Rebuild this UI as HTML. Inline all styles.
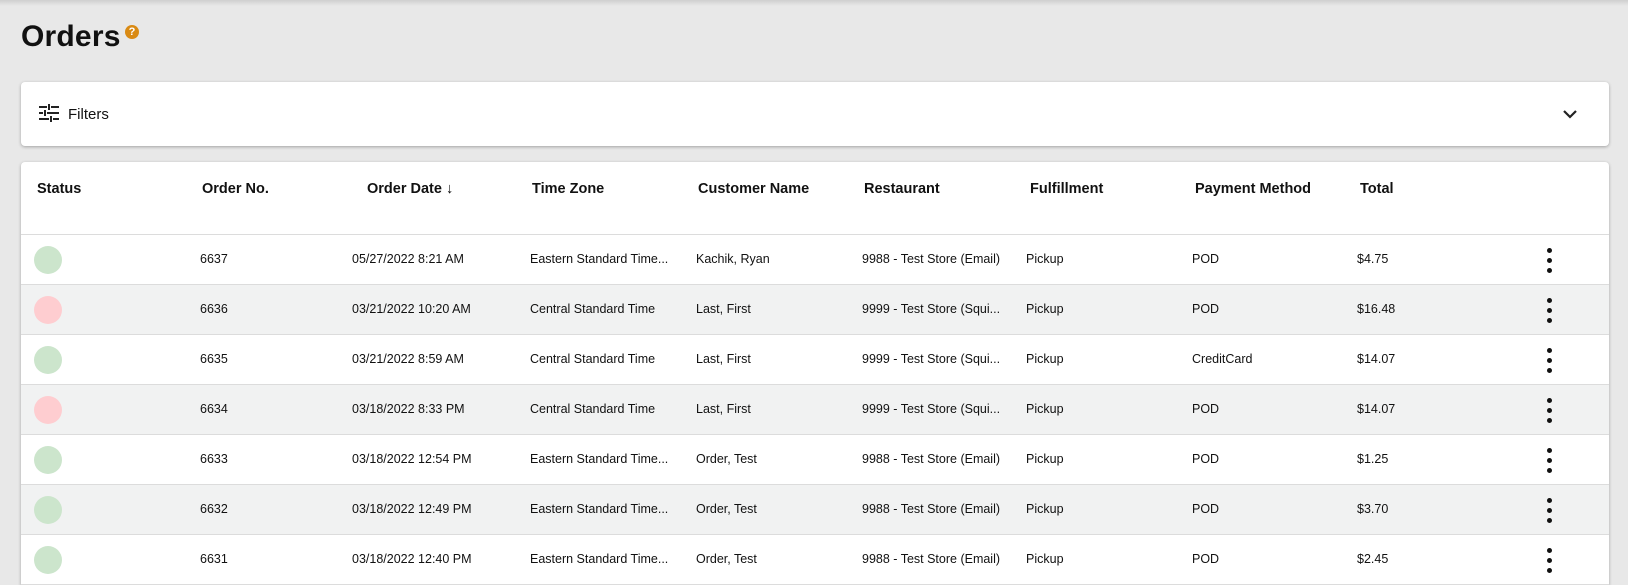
<!DOCTYPE html>
<html><head><meta charset="utf-8"><style>
*{margin:0;padding:0;box-sizing:border-box}
html,body{width:1628px;height:585px;overflow:hidden}
body{background:#e8e8e8;font-family:"Liberation Sans",sans-serif;color:#111;position:relative}
.topsh{position:absolute;left:0;top:0;width:1628px;height:6px;background:linear-gradient(#cfcfcf,#e8e8e8)}
h1{position:absolute;left:21px;top:20px;font-size:30px;font-weight:bold;letter-spacing:0.2px}
.help{position:absolute;left:125px;top:25px;width:14px;height:14px;border-radius:50%;background:#d98a14;color:#fff;font-size:11px;font-weight:bold;text-align:center;line-height:14px}
.card{position:absolute;left:21px;width:1588px;background:#fff;border-radius:4px;box-shadow:0 1px 3px rgba(0,0,0,.3)}
.filters{top:82px;height:64px}
.filters .lbl{position:absolute;left:47px;top:24px;font-size:15px}
.tbl{top:162px;height:423px;overflow:hidden;border-bottom-left-radius:0;border-bottom-right-radius:0}
.hdr{position:absolute;top:0;height:73px;width:100%;border-bottom:1px solid #dcdcdc}
.h{position:absolute;top:19px;font-size:14.5px;font-weight:bold}
.row{position:absolute;left:0;width:100%;height:50px;border-bottom:1px solid #dcdcdc}
.row.alt{background:#f1f2f2}
.c{position:absolute;top:17px;font-size:12.5px;white-space:nowrap}
.dot{position:absolute;left:13px;top:11px;width:28px;height:28px;border-radius:50%}
.g{background:#cce5cc}.r{background:#fecdd0}
.k{position:absolute;left:1526px;top:13px;width:5px}
.k i{display:block;width:5px;height:5px;border-radius:50%;background:#111;margin-bottom:5px}
</style></head><body>
<div class="topsh"></div>
<h1>Orders</h1><div class="help">?</div>
<div class="card filters">
<svg style="position:absolute;left:18px;top:22px" width="20" height="18" viewBox="0 0 20 18"><g fill="#222"><rect x="0" y="2" width="8" height="2"/><rect x="12" y="2" width="8" height="2"/><rect x="9" y="0" width="2" height="6"/><rect x="0" y="8" width="4" height="2"/><rect x="8" y="8" width="12" height="2"/><rect x="5" y="6" width="2" height="6"/><rect x="0" y="14" width="10" height="2"/><rect x="14" y="14" width="6" height="2"/><rect x="11" y="12" width="2" height="6"/></g></svg>
<div class="lbl">Filters</div>
<svg style="position:absolute;left:1541px;top:27px" width="16" height="10" viewBox="0 0 16 10"><path d="M2 2l6 6 6-6" fill="none" stroke="#222" stroke-width="2.2"/></svg>
</div>
<div class="card tbl">
<div class="hdr">
<div class="h" style="left:16px">Status</div>
<div class="h" style="left:181px">Order No.</div>
<div class="h" style="left:346px">Order Date <span style="font-weight:normal">&#8595;</span></div>
<div class="h" style="left:511px">Time Zone</div>
<div class="h" style="left:677px">Customer Name</div>
<div class="h" style="left:843px">Restaurant</div>
<div class="h" style="left:1009px">Fulfillment</div>
<div class="h" style="left:1174px">Payment Method</div>
<div class="h" style="left:1339px">Total</div>
</div>
<div class="row" style="top:73px"><div class="dot g"></div><div class="c" style="left:179px">6637</div><div class="c" style="left:331px">05/27/2022 8:21 AM</div><div class="c" style="left:509px">Eastern Standard Time...</div><div class="c" style="left:675px">Kachik, Ryan</div><div class="c" style="left:841px">9988 - Test Store (Email)</div><div class="c" style="left:1005px">Pickup</div><div class="c" style="left:1171px">POD</div><div class="c" style="left:1336px">$4.75</div><div class="k"><i></i><i></i><i></i></div></div>
<div class="row alt" style="top:123px"><div class="dot r"></div><div class="c" style="left:179px">6636</div><div class="c" style="left:331px">03/21/2022 10:20 AM</div><div class="c" style="left:509px">Central Standard Time</div><div class="c" style="left:675px">Last, First</div><div class="c" style="left:841px">9999 - Test Store (Squi...</div><div class="c" style="left:1005px">Pickup</div><div class="c" style="left:1171px">POD</div><div class="c" style="left:1336px">$16.48</div><div class="k"><i></i><i></i><i></i></div></div>
<div class="row" style="top:173px"><div class="dot g"></div><div class="c" style="left:179px">6635</div><div class="c" style="left:331px">03/21/2022 8:59 AM</div><div class="c" style="left:509px">Central Standard Time</div><div class="c" style="left:675px">Last, First</div><div class="c" style="left:841px">9999 - Test Store (Squi...</div><div class="c" style="left:1005px">Pickup</div><div class="c" style="left:1171px">CreditCard</div><div class="c" style="left:1336px">$14.07</div><div class="k"><i></i><i></i><i></i></div></div>
<div class="row alt" style="top:223px"><div class="dot r"></div><div class="c" style="left:179px">6634</div><div class="c" style="left:331px">03/18/2022 8:33 PM</div><div class="c" style="left:509px">Central Standard Time</div><div class="c" style="left:675px">Last, First</div><div class="c" style="left:841px">9999 - Test Store (Squi...</div><div class="c" style="left:1005px">Pickup</div><div class="c" style="left:1171px">POD</div><div class="c" style="left:1336px">$14.07</div><div class="k"><i></i><i></i><i></i></div></div>
<div class="row" style="top:273px"><div class="dot g"></div><div class="c" style="left:179px">6633</div><div class="c" style="left:331px">03/18/2022 12:54 PM</div><div class="c" style="left:509px">Eastern Standard Time...</div><div class="c" style="left:675px">Order, Test</div><div class="c" style="left:841px">9988 - Test Store (Email)</div><div class="c" style="left:1005px">Pickup</div><div class="c" style="left:1171px">POD</div><div class="c" style="left:1336px">$1.25</div><div class="k"><i></i><i></i><i></i></div></div>
<div class="row alt" style="top:323px"><div class="dot g"></div><div class="c" style="left:179px">6632</div><div class="c" style="left:331px">03/18/2022 12:49 PM</div><div class="c" style="left:509px">Eastern Standard Time...</div><div class="c" style="left:675px">Order, Test</div><div class="c" style="left:841px">9988 - Test Store (Email)</div><div class="c" style="left:1005px">Pickup</div><div class="c" style="left:1171px">POD</div><div class="c" style="left:1336px">$3.70</div><div class="k"><i></i><i></i><i></i></div></div>
<div class="row" style="top:373px"><div class="dot g"></div><div class="c" style="left:179px">6631</div><div class="c" style="left:331px">03/18/2022 12:40 PM</div><div class="c" style="left:509px">Eastern Standard Time...</div><div class="c" style="left:675px">Order, Test</div><div class="c" style="left:841px">9988 - Test Store (Email)</div><div class="c" style="left:1005px">Pickup</div><div class="c" style="left:1171px">POD</div><div class="c" style="left:1336px">$2.45</div><div class="k"><i></i><i></i><i></i></div></div>
</div>
</body></html>
